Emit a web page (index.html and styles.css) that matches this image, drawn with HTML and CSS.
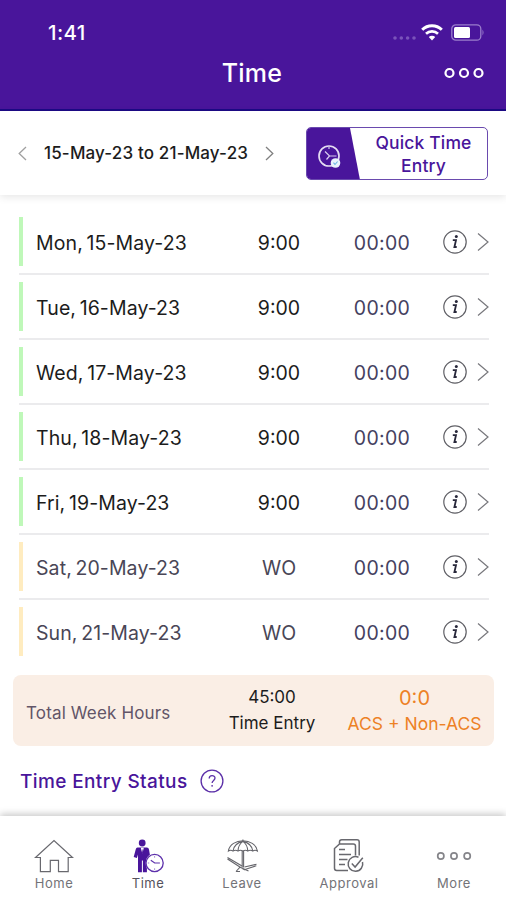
FILE: index.html
```html
<!DOCTYPE html>
<html lang="en">
<head>
  <meta charset="UTF-8" />
  <meta name="viewport" content="width=device-width, initial-scale=1.0" />
  <title>Time</title>
  <link rel="stylesheet" href="styles.css">
</head>
<body>
  <svg class="symbols" width="0" height="0">
    <symbol id="info" viewBox="0 0 24 24">
      <circle cx="12" cy="12" r="11.2" fill="none" stroke="#606066" stroke-width="1.2"/>
      <circle cx="13.3" cy="6.6" r="1.5" fill="#27273a"/>
      <path d="M9.8 10.2h3.2l-1.6 6.8h2.3" fill="none" stroke="#27273a" stroke-width="1.8"/>
    </symbol>
    <symbol id="chevron" viewBox="0 0 12 20">
      <path d="M1 1.5l10 8.500-10 8.500" fill="none" stroke="#77777c" stroke-width="1.2"/>
    </symbol>
    <symbol id="dots" viewBox="0 0 40 12">
      <g fill="none" stroke="currentColor">
        <circle cx="5.5" cy="6" r="4"/>
        <circle cx="20" cy="6" r="4"/>
        <circle cx="34.5" cy="6" r="4"/>
      </g>
    </symbol>
  </svg>

  <header class="header">
    <div class="status-bar">
      <span class="clock">1:41</span>
      <svg class="signal" width="24" height="4" viewBox="0 0 24 4" fill="#7a53ba">
        <circle cx="2" cy="2" r="1.8"/>
        <circle cx="8.3" cy="2" r="1.8"/>
        <circle cx="14.6" cy="2" r="1.8"/>
        <circle cx="21" cy="2" r="1.8"/>
      </svg>
      <svg class="wifi" width="22" height="17" viewBox="0 0 22 17" fill="none" stroke="#fff">
        <path d="M1.2 5.8a14 14 0 0 1 19.6 0" stroke-width="3"/>
        <path d="M5 9.8a8.6 8.6 0 0 1 12 0" stroke-width="2.6"/>
        <path d="M11 16.4l-3.2-3.3a4.6 4.6 0 0 1 6.4 0z" fill="#fff" stroke="none"/>
      </svg>
      <svg class="battery" width="34" height="17" viewBox="0 0 34 17">
        <rect x="0.8" y="0.8" width="29" height="15.4" rx="4" fill="none" stroke="#9a7dcc" stroke-width="1.3"/>
        <rect x="3" y="3" width="16" height="11" rx="1.5" fill="#fff"/>
        <path d="M31.5 5.5q2 3 0 6z" fill="#9a7dcc"/>
      </svg>
    </div>
    <div class="title-bar">
      <h1>Time</h1>
      <svg class="menu-dots" width="40" height="12"><use href="#dots"/></svg>
    </div>
  </header>

  <section class="week-bar">
    <svg class="prev" width="9" height="15" viewBox="0 0 9 15"><path d="M8 1L1.2 7.5 8 14" fill="none" stroke="#a0a0a0" stroke-width="1.3"/></svg>
    <span class="range">15-May-23 to 21-May-23</span>
    <svg class="next" width="9" height="15" viewBox="0 0 9 15"><path d="M1 1l6.8 6.5L1 14" fill="none" stroke="#808080" stroke-width="1.3"/></svg>
    <button class="quick-entry">
      <svg width="53" height="52" viewBox="0 0 53 52">
        <path d="M0 0h43l10 52H0z" fill="#49159b"/>
        <circle cx="22" cy="28" r="10" fill="none" stroke="#e4dcf2" stroke-width="1.7"/>
        <path d="M18 23.500l4.500 4.500h7M22.5 28l-3 3.5M22 19v2" fill="none" stroke="#d9cdf0" stroke-width="1.2"/>
        <circle cx="28.5" cy="35" r="4.8" fill="#eaf4fc"/>
        <path d="M26.5 34.700l1.5 1.8 2.6-3" fill="none" stroke="#69b5e2" stroke-width="1.1"/>
      </svg>
      <span>Quick Time<br>Entry</span>
    </button>
  </section>

  <main class="days">
    <div class="day">
      <span class="date">Mon, 15-May-23</span>
      <span class="hours">9:00</span>
      <span class="logged">00:00</span>
      <svg width="24" height="24"><use href="#info"/></svg>
      <svg class="arrow" width="12" height="20"><use href="#chevron"/></svg>
    </div>
    <div class="day">
      <span class="date">Tue, 16-May-23</span>
      <span class="hours">9:00</span>
      <span class="logged">00:00</span>
      <svg width="24" height="24"><use href="#info"/></svg>
      <svg class="arrow" width="12" height="20"><use href="#chevron"/></svg>
    </div>
    <div class="day">
      <span class="date">Wed, 17-May-23</span>
      <span class="hours">9:00</span>
      <span class="logged">00:00</span>
      <svg width="24" height="24"><use href="#info"/></svg>
      <svg class="arrow" width="12" height="20"><use href="#chevron"/></svg>
    </div>
    <div class="day">
      <span class="date">Thu, 18-May-23</span>
      <span class="hours">9:00</span>
      <span class="logged">00:00</span>
      <svg width="24" height="24"><use href="#info"/></svg>
      <svg class="arrow" width="12" height="20"><use href="#chevron"/></svg>
    </div>
    <div class="day">
      <span class="date">Fri, 19-May-23</span>
      <span class="hours">9:00</span>
      <span class="logged">00:00</span>
      <svg width="24" height="24"><use href="#info"/></svg>
      <svg class="arrow" width="12" height="20"><use href="#chevron"/></svg>
    </div>
    <div class="day weekend">
      <span class="date">Sat, 20-May-23</span>
      <span class="hours">WO</span>
      <span class="logged">00:00</span>
      <svg width="24" height="24"><use href="#info"/></svg>
      <svg class="arrow" width="12" height="20"><use href="#chevron"/></svg>
    </div>
    <div class="day weekend">
      <span class="date">Sun, 21-May-23</span>
      <span class="hours">WO</span>
      <span class="logged">00:00</span>
      <svg width="24" height="24"><use href="#info"/></svg>
      <svg class="arrow" width="12" height="20"><use href="#chevron"/></svg>
    </div>
  </main>

  <section class="total">
    <span class="total-label">Total Week Hours</span>
    <div class="total-time">
      <span class="total-hours">45:00</span>
      <span>Time Entry</span>
    </div>
    <div class="total-acs">
      <span class="acs-hours">0:0</span>
      <span>ACS + Non-ACS</span>
    </div>
  </section>

  <section class="entry-status">
    <span>Time Entry Status</span>
    <svg width="24" height="24" viewBox="0 0 24 24" fill="none" stroke="#5b2fa8">
      <circle cx="12" cy="12" r="10.9" stroke-width="1.3"/>
      <path d="M9.2 9.4c0-3.8 5.8-3.6 5.8-.3 0 2.3-2.9 2.3-2.9 4.9" stroke-width="1.3"/>
      <circle cx="12.1" cy="16.8" r="0.9" fill="#5b2fa8" stroke="none"/>
    </svg>
  </section>

  <nav class="tabs">
    <a class="tab">
      <svg width="40" height="36" viewBox="0 0 40 36" fill="none" stroke="#68686e" stroke-width="1.2">
        <path d="M1.500 19.500L20 2.500l18.500 17h-4.300v14.200H24.500V22.300h-8.200v11.400H6.400V19.500z"/>
      </svg>
      <span>Home</span>
    </a>
    <a class="tab active">
      <svg width="32" height="36" viewBox="0 0 32 36">
        <g fill="#49159b">
          <circle cx="10.2" cy="5" r="3.4"/>
          <path d="M5.5 9.5h9.4q1.8 0 2.1 2l.9 5.2q-4.2 2.7-4.2 8.3 0 3.5 1.2 5.600v3.700h-4V22.500H9.900v11.800H6V16.5L4.900 20 1.700 19l2-7.600q.4-1.900 1.800-1.900z"/>
        </g>
        <path d="M8.800 9.800l1.500 6 1.500-6z" fill="#fff"/>
        <path d="M10.300 10.600l-.7 4.300.7 1 .7-1z" fill="#49159b"/>
        <circle cx="22.600" cy="25" r="8.600" fill="#fff" stroke="#5d30ab" stroke-width="1.300"/>
        <path d="M18.800 22.200l3.900 2.800h5.200" fill="none" stroke="#5d30ab" stroke-width="1.200"/>
        <path d="M22.600 18.200v1.400M22.600 30.400v1.400M15.800 25h1.400" stroke="#8c6cc4" stroke-width="0.900"/>
      </svg>
      <span>Time</span>
    </a>
    <a class="tab">
      <svg width="34" height="36" viewBox="0 0 34 36" fill="none" stroke="#65656b" stroke-width="1.1">
        <path d="M3.400 13C5.500 -0.500 30.300 -0.500 32.400 13q-2.300-1.500-4.600 0-2.600-1.500-5 0-2.400-1.500-4.900 0-2.400-1.500-4.900 0-2.500-1.500-5 0-2.300-1.500-4.600 0z"/>
        <path d="M13 13c.2-4.500 1.900-7.500 4.900-9.600 3 2.100 4.700 5.100 4.900 9.600M8 13c.8-5.200 4.300-8.400 9.900-9.600 5.600 1.200 9.100 4.400 9.900 9.600M17.900 1.500v1.900"/>
        <path d="M17.200 13v16.500M18.600 13v16.500"/>
        <path d="M2.500 19.500l14.500 8.500M2.500 21l12.800 8.200 4 2.500 12-4M11 33.500l4-4.300 8.500 3.800M11 33.500h4M19.500 29l12-2.700"/>
      </svg>
      <span>Leave</span>
    </a>
    <a class="tab">
      <svg width="34" height="36" viewBox="0 0 34 36" fill="none" stroke="#68686e" stroke-width="1.5">
        <path d="M7.500 5.500V4q0-2.200 2.200-2.200H25q2.200 0 2.200 2.200v13.500M23.500 17.500V8.200q0-2.200-2.200-2.200H7.500L2.500 10.500v19.800q0 2.200 2.200 2.200H16"/>
        <path d="M7 11.500h6M7 16.500h12M7 21.500h8.500M7 26.500h6"/>
        <path d="M30.500 24A7.300 7.300 0 1 1 26.500 19.300"/>
        <path d="M19.800 25.500l3.300 3.500 7.700-9.300"/>
      </svg>
      <span>Approval</span>
    </a>
    <a class="tab">
      <svg class="more-dots" width="36" height="36" viewBox="0 0 36 36" fill="none" stroke="#85858a" stroke-width="1.7">
        <circle cx="4.8" cy="18" r="3.1"/>
        <circle cx="18" cy="18" r="3.1"/>
        <circle cx="31.2" cy="18" r="3.1"/>
      </svg>
      <span>More</span>
    </a>
  </nav>
</body>
</html>
```

FILE: styles.css
```css
* {
  box-sizing: border-box;
}

body {
  margin: 0;
  height: 900px;
  display: flex;
  flex-direction: column;
  font-family: Inter, "Liberation Sans", sans-serif;
  background-color: #fff;
  color: #1c1c1c;
  overflow: hidden;
  white-space: nowrap;
}

svg {
  display: block;
  flex: none;
}

.symbols {
  position: absolute;
}

/* header */
.header {
  height: 111px;
  flex: none;
  background-color: #49159b;
  border-bottom: 2px solid #1c0a86;
  color: #fff;
}

.status-bar {
  display: flex;
  align-items: center;
  height: 52px;
  padding: 13px 21px 0 48px;
}

.clock {
  font-size: 20.5px;
  font-weight: 500;
  letter-spacing: 0.4px;
  flex: 1;
}

.signal {
  margin: 10px 4px 0 0;
}

.wifi {
  margin-right: 8px;
}

.title-bar {
  display: grid;
  grid-template-columns: 1fr auto 1fr;
  align-items: center;
  height: 42px;
  padding: 0 22px 0 20px;
}

h1 {
  grid-column: 2;
  margin: 0;
  font-size: 25px;
  font-weight: 500;
  letter-spacing: 0.2px;
}

.menu-dots {
  justify-self: end;
  margin-top: -1px;
  stroke-width: 2.2;
}

/* week picker */
.week-bar {
  height: 84px;
  flex: none;
  display: flex;
  align-items: center;
  padding: 0 18px;
  box-shadow: 0 2px 8px rgba(0, 0, 0, 0.1);
}

.range {
  width: 204px;
  margin: 0 17px;
  font-size: 17px;
  font-weight: 500;
  letter-spacing: 0.15px;
}

.quick-entry {
  display: flex;
  width: 182px;
  height: 53px;
  margin-left: auto;
  padding: 0;
  overflow: hidden;
  background-color: #fff;
  border: 1px solid #6a4aae;
  border-radius: 5px;
  color: #49159b;
  font-family: inherit;
  font-size: 17.5px;
  font-weight: 500;
  letter-spacing: 0.15px;
  line-height: 23px;
}

.quick-entry span {
  flex: 1;
  padding: 3px 0 0 0;
}

/* day rows */
.days {
  padding: 15px 17px 0 19px;
}

.day {
  display: grid;
  grid-template-columns: 213px 94px 117px 24px 1fr;
  align-items: center;
  height: 65px;
  border-bottom: 2px solid #ebebed;
  font-size: 19.5px;
}

.day:last-child {
  border-bottom-color: transparent;
}

.date {
  display: flex;
  align-items: center;
  height: 49px;
  padding: 2px 0 0 13px;
  border-left: 4px solid #bff8b9;
  letter-spacing: 0.1px;
  word-spacing: -2px;
}

.hours {
  padding-top: 2px;
  text-align: center;
}

.logged {
  padding: 2px 5px 0 0;
  text-align: center;
  letter-spacing: 0.3px;
  color: #45415f;
}

.arrow {
  justify-self: end;
}

.weekend {
  color: #494656;
}

.weekend .date {
  border-left-color: #ffecc0;
}

/* weekly total */
.total {
  display: grid;
  grid-template-columns: 190px 138px 1fr;
  align-items: center;
  height: 71px;
  flex: none;
  margin: 10px 12px 0 13px;
  background-color: #faeee5;
  border-radius: 8px;
  font-size: 17px;
}

.total-label {
  padding: 4px 0 0 13px;
  letter-spacing: 0.15px;
  color: #625568;
}

.total-time,
.total-acs {
  display: flex;
  flex-direction: column;
  align-items: center;
  line-height: 26px;
}

.total-time {
  padding-bottom: 2px;
}

.total-acs {
  padding: 1px 6px 0 0;
  font-size: 17.5px;
  color: #ed8125;
}

.acs-hours {
  font-size: 20px;
}

.entry-status {
  display: flex;
  align-items: center;
  gap: 12px;
  flex: 1;
  padding-left: 20px;
  color: #49159b;
  font-size: 19px;
  font-weight: 500;
  letter-spacing: 0.38px;
}

/* bottom tabs */
.tabs {
  display: grid;
  grid-template-columns: 82px 106px 82px 132px 78px;
  height: 84px;
  flex: none;
  padding: 22px 0 0 13px;
  background-color: #fff;
  box-shadow: 0 -2px 7px rgba(0, 0, 0, 0.22);
}

.tab {
  display: flex;
  flex-direction: column;
  align-items: center;
  color: #737378;
  font-size: 13px;
  letter-spacing: 0.5px;
  line-height: 18px;
}

.active {
  color: #55525c;
}
```
